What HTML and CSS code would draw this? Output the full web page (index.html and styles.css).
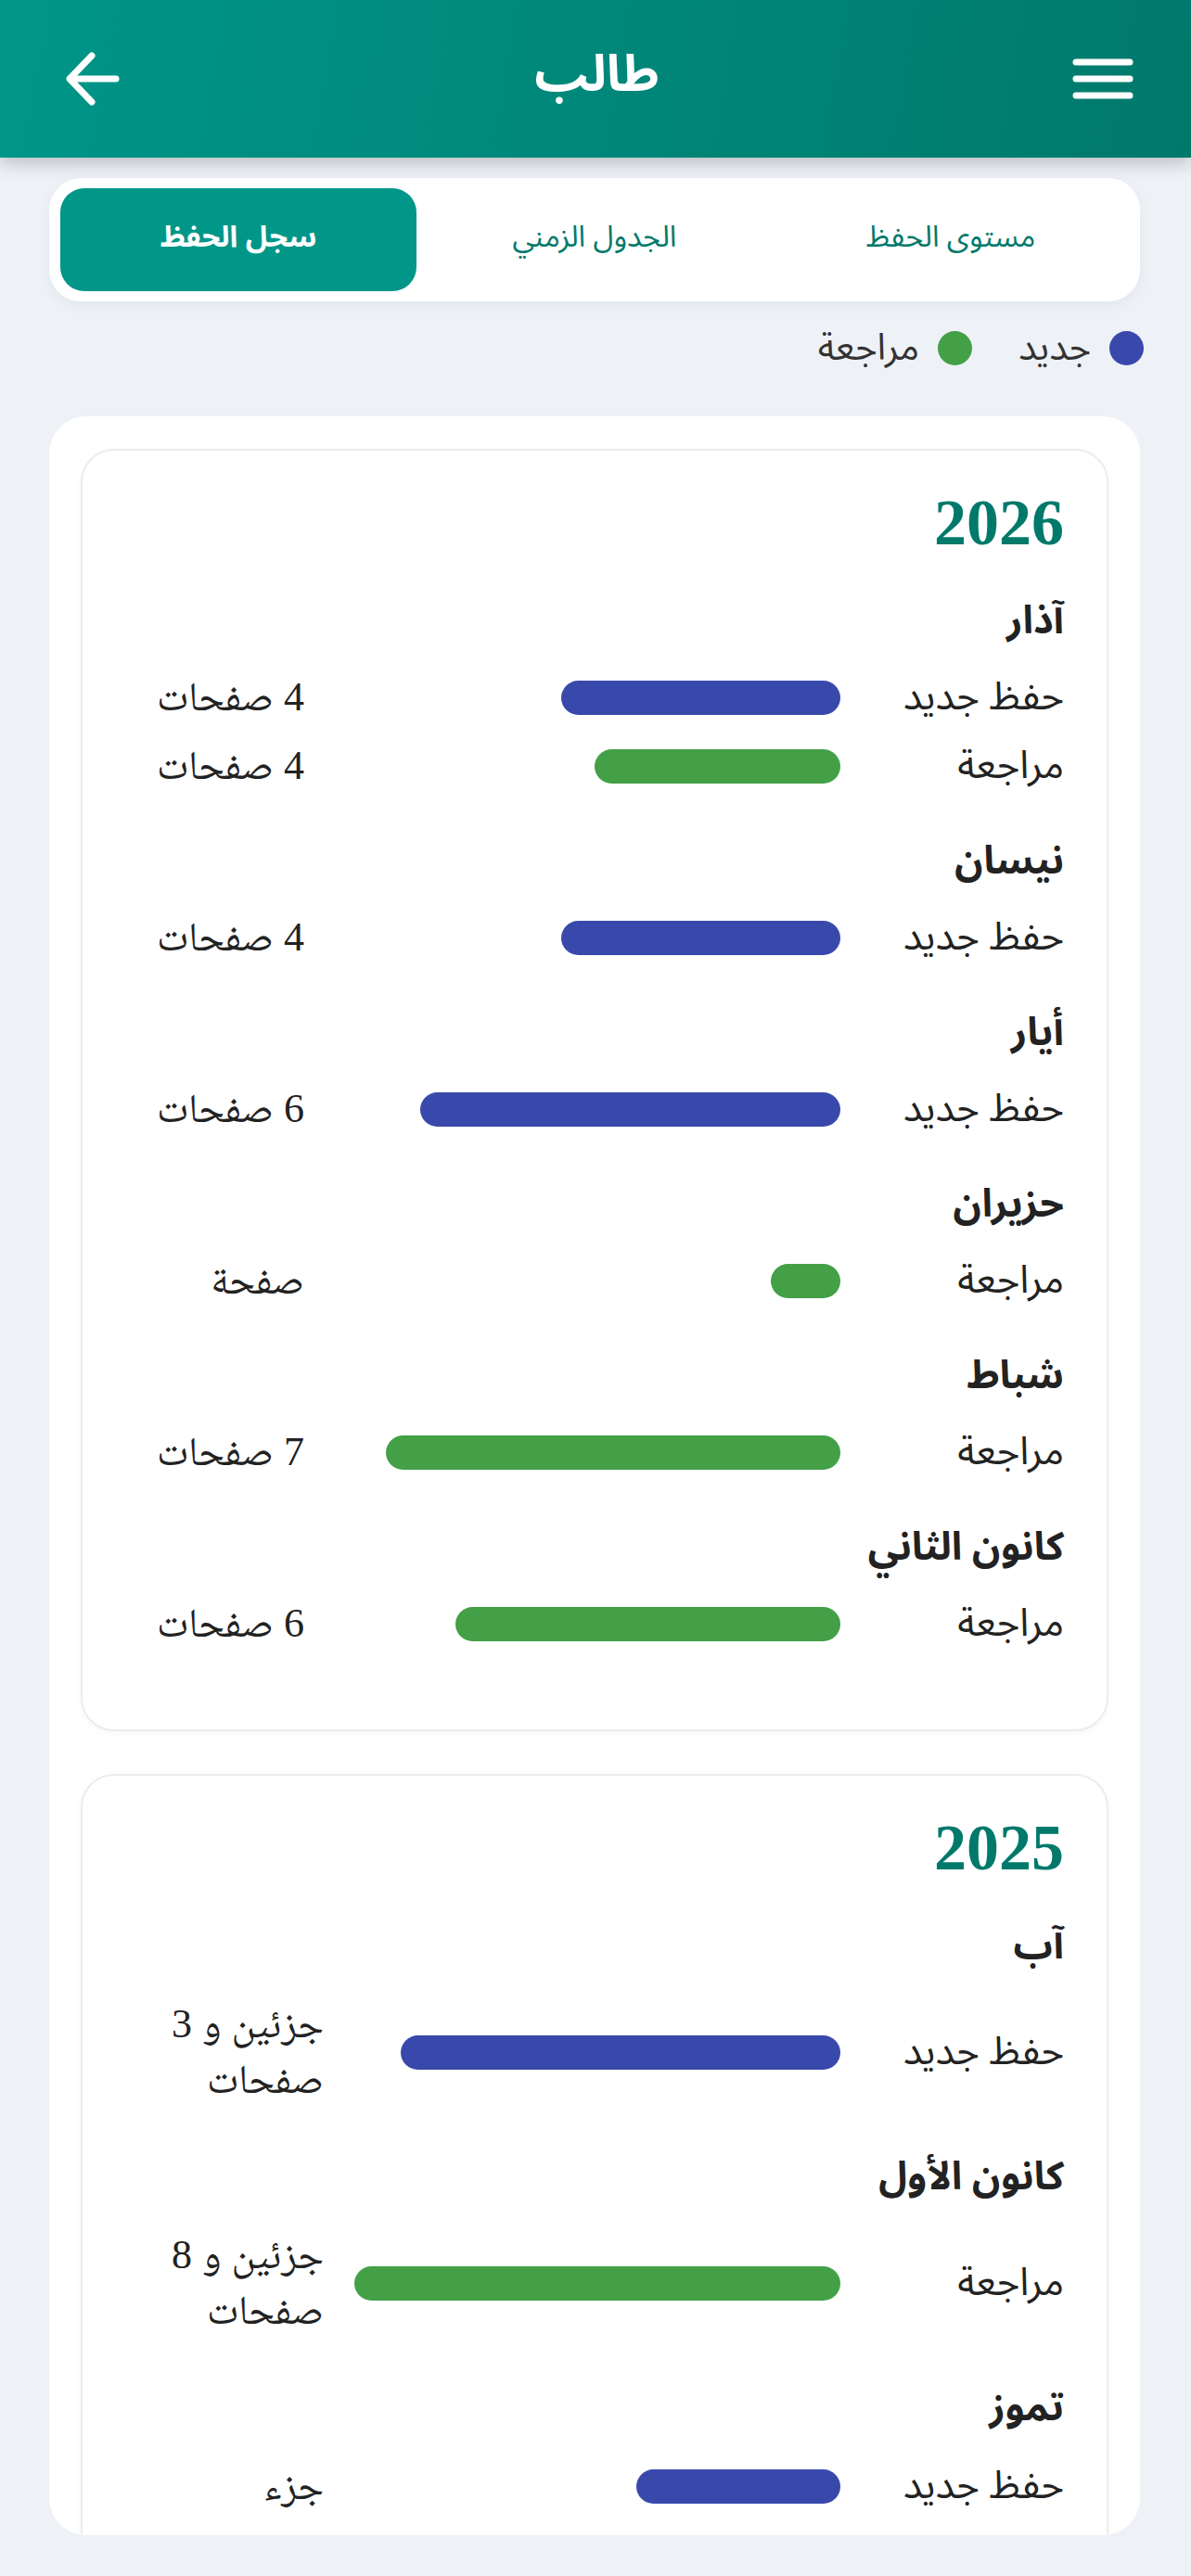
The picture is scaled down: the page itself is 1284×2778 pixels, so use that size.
FILE: index.html
```html
<!DOCTYPE html>
<html lang="ar" dir="rtl">
<head>
<meta charset="utf-8">
<title>طالب</title>
<link rel="stylesheet" href="styles.css">
</head>
<body>
<header class="topbar">
  <button class="icon-btn menu-btn" aria-label="القائمة">
    <svg width="66" height="44" viewBox="0 0 66 44"><g stroke="#fff" stroke-width="7" stroke-linecap="round"><line x1="4" y1="4" x2="62" y2="4"/><line x1="4" y1="22" x2="62" y2="22"/><line x1="4" y1="40" x2="62" y2="40"/></g></svg>
  </button>
  <h1 class="topbar-title">طالب</h1>
  <button class="icon-btn back-btn" aria-label="رجوع">
    <svg width="60" height="58" viewBox="0 0 60 58"><g fill="none" stroke="#fff" stroke-width="7" stroke-linecap="round" stroke-linejoin="round"><line x1="54" y1="29" x2="6" y2="29"/><polyline points="28,4 4,29 28,54"/></g></svg>
  </button>
</header>

<nav class="tabs">
  <div class="tab">مستوى الحفظ</div>
  <div class="tab">الجدول الزمني</div>
  <div class="tab tab-active">سجل الحفظ</div>
</nav>

<div class="legend">
  <span class="legend-item"><span class="dot dot-new"></span>جديد</span>
  <span class="legend-item"><span class="dot dot-review"></span>مراجعة</span>
</div>

<main class="panel">
  <section class="year-card y2026">
    <h2 class="year">2026</h2>

    <div class="month">
      <h3 class="month-title">آذار</h3>
      <div class="entry"><span class="entry-label">حفظ جديد</span><div class="track"><div class="bar bar-new" style="width:301px"></div></div><span class="entry-value">4 صفحات</span></div>
      <div class="entry"><span class="entry-label">مراجعة</span><div class="track"><div class="bar bar-review" style="width:265px"></div></div><span class="entry-value">4 صفحات</span></div>
    </div>

    <div class="month">
      <h3 class="month-title">نيسان</h3>
      <div class="entry"><span class="entry-label">حفظ جديد</span><div class="track"><div class="bar bar-new" style="width:301px"></div></div><span class="entry-value">4 صفحات</span></div>
    </div>

    <div class="month">
      <h3 class="month-title">أيار</h3>
      <div class="entry"><span class="entry-label">حفظ جديد</span><div class="track"><div class="bar bar-new" style="width:453px"></div></div><span class="entry-value">6 صفحات</span></div>
    </div>

    <div class="month">
      <h3 class="month-title">حزيران</h3>
      <div class="entry"><span class="entry-label">مراجعة</span><div class="track"><div class="bar bar-review" style="width:75px"></div></div><span class="entry-value">صفحة</span></div>
    </div>

    <div class="month">
      <h3 class="month-title">شباط</h3>
      <div class="entry"><span class="entry-label">مراجعة</span><div class="track"><div class="bar bar-review" style="width:490px"></div></div><span class="entry-value">7 صفحات</span></div>
    </div>

    <div class="month">
      <h3 class="month-title">كانون الثاني</h3>
      <div class="entry"><span class="entry-label">مراجعة</span><div class="track"><div class="bar bar-review" style="width:415px"></div></div><span class="entry-value">6 صفحات</span></div>
    </div>
  </section>

  <section class="year-card y2025">
    <h2 class="year">2025</h2>

    <div class="month">
      <h3 class="month-title">آب</h3>
      <div class="entry"><span class="entry-label">حفظ جديد</span><div class="track"><div class="bar bar-new" style="width:474px"></div></div><span class="entry-value">جزئين و 3 صفحات</span></div>
    </div>

    <div class="month">
      <h3 class="month-title">كانون الأول</h3>
      <div class="entry"><span class="entry-label">مراجعة</span><div class="track"><div class="bar bar-review" style="width:524px"></div></div><span class="entry-value">جزئين و 8 صفحات</span></div>
    </div>

    <div class="month">
      <h3 class="month-title">تموز</h3>
      <div class="entry"><span class="entry-label">حفظ جديد</span><div class="track"><div class="bar bar-new" style="width:220px"></div></div><span class="entry-value">جزء</span></div>
    </div>
  </section>
</main>
</body>
</html>
```

FILE: styles.css
```css
* { box-sizing: border-box; }

html, body {
  margin: 0;
  padding: 0;
}

body {
  background: #eef2f7;
  direction: rtl;
  font-family: "Noto Sans Arabic", "Noto Sans Arabic UI", "Noto Sans", "DejaVu Sans", sans-serif;
  color: #222;
  height: 2778px;
  overflow: hidden;
}

/* ---------- top bar ---------- */
.topbar {
  height: 170px;
  background: linear-gradient(100deg, #009688 0%, #00897b 45%, #00796b 100%);
  display: flex;
  align-items: center;
  justify-content: space-between;
  padding: 0 62px 0 65px;
  box-shadow: 0 6px 18px rgba(0, 0, 0, 0.22);
  position: relative;
  z-index: 2;
}

.icon-btn {
  background: none;
  border: 0;
  padding: 0;
  display: flex;
  align-items: center;
  justify-content: center;
  width: 66px;
  height: 60px;
}

.back-btn { justify-content: flex-start; }

.topbar-title {
  margin: 0;
  color: #fff;
  font-size: 54px;
  font-weight: 700;
  line-height: 1;
  padding-bottom: 8px;
}

/* ---------- tabs ---------- */
.tabs {
  margin: 22px 55px 0 53px;
  height: 133px;
  background: #fff;
  border-radius: 34px;
  padding: 11px 12px;
  display: flex;
  box-shadow: 0 4px 14px rgba(30, 50, 80, 0.06);
}

.tab {
  flex: 1;
  display: flex;
  align-items: center;
  justify-content: center;
  color: #00796b;
  font-size: 32px;
  border-radius: 26px;
  padding-bottom: 6px;
}

.tab-active {
  background: #009688;
  color: #fff;
  font-weight: 700;
}

/* ---------- legend ---------- */
.legend {
  display: flex;
  gap: 50px;
  padding: 0 51px;
  margin-top: 32px;
  height: 36px;
  align-items: center;
  font-size: 40px;
  color: #333;
}

.legend-item {
  display: flex;
  align-items: center;
  gap: 20px;
}

.dot {
  width: 37px;
  height: 37px;
  border-radius: 50%;
  display: inline-block;
}

.dot-new { background: #3949ab; }
.dot-review { background: #43a047; }

/* ---------- panel ---------- */
.panel {
  margin: 56px 55px 0 53px;
  height: 2285px;
  overflow: hidden;
  background: #fff;
  border-radius: 40px;
  padding: 35px 34px;
  display: flex;
  flex-direction: column;
  gap: 46px;
}

.year-card {
  flex: none;
  border: 2px solid #ececec;
  border-radius: 36px;
  padding: 38px 46px 77px 76px;
  box-shadow: 0 2px 8px rgba(0, 0, 0, 0.03);
  --val-w: 163px;
}

.y2025 { --val-w: 184px; }

.year {
  margin: 0;
  font-family: "Liberation Serif", serif;
  font-size: 70px;
  line-height: 80px;
  font-weight: 700;
  color: #00796b;
}

.month { margin-top: 38px; }

.month-title {
  margin: 0 0 17px;
  font-size: 42px;
  line-height: 56px;
  font-weight: 700;
  color: #222;
}

.entry {
  display: grid;
  grid-template-columns: 241px 1fr var(--val-w);
  align-items: center;
  padding: 9px 0;
  font-size: 42px;
  line-height: 56px;
  color: #222;
}

.entry-label { white-space: nowrap; }

.track {
  display: flex;
  justify-content: flex-start;
}

.bar {
  height: 37px;
  border-radius: 19px;
}

.bar-new { background: #3949ab; }
.bar-review { background: #43a047; }

.entry-value {
  text-align: right;
  font-family: "Liberation Serif", "Noto Naskh Arabic", "Noto Serif Arabic", "Amiri", "Noto Sans Arabic", serif;
  font-size: 44px;
}

.y2026 .entry-value { white-space: nowrap; }
.y2025 .entry-value { line-height: 60px; }
```
